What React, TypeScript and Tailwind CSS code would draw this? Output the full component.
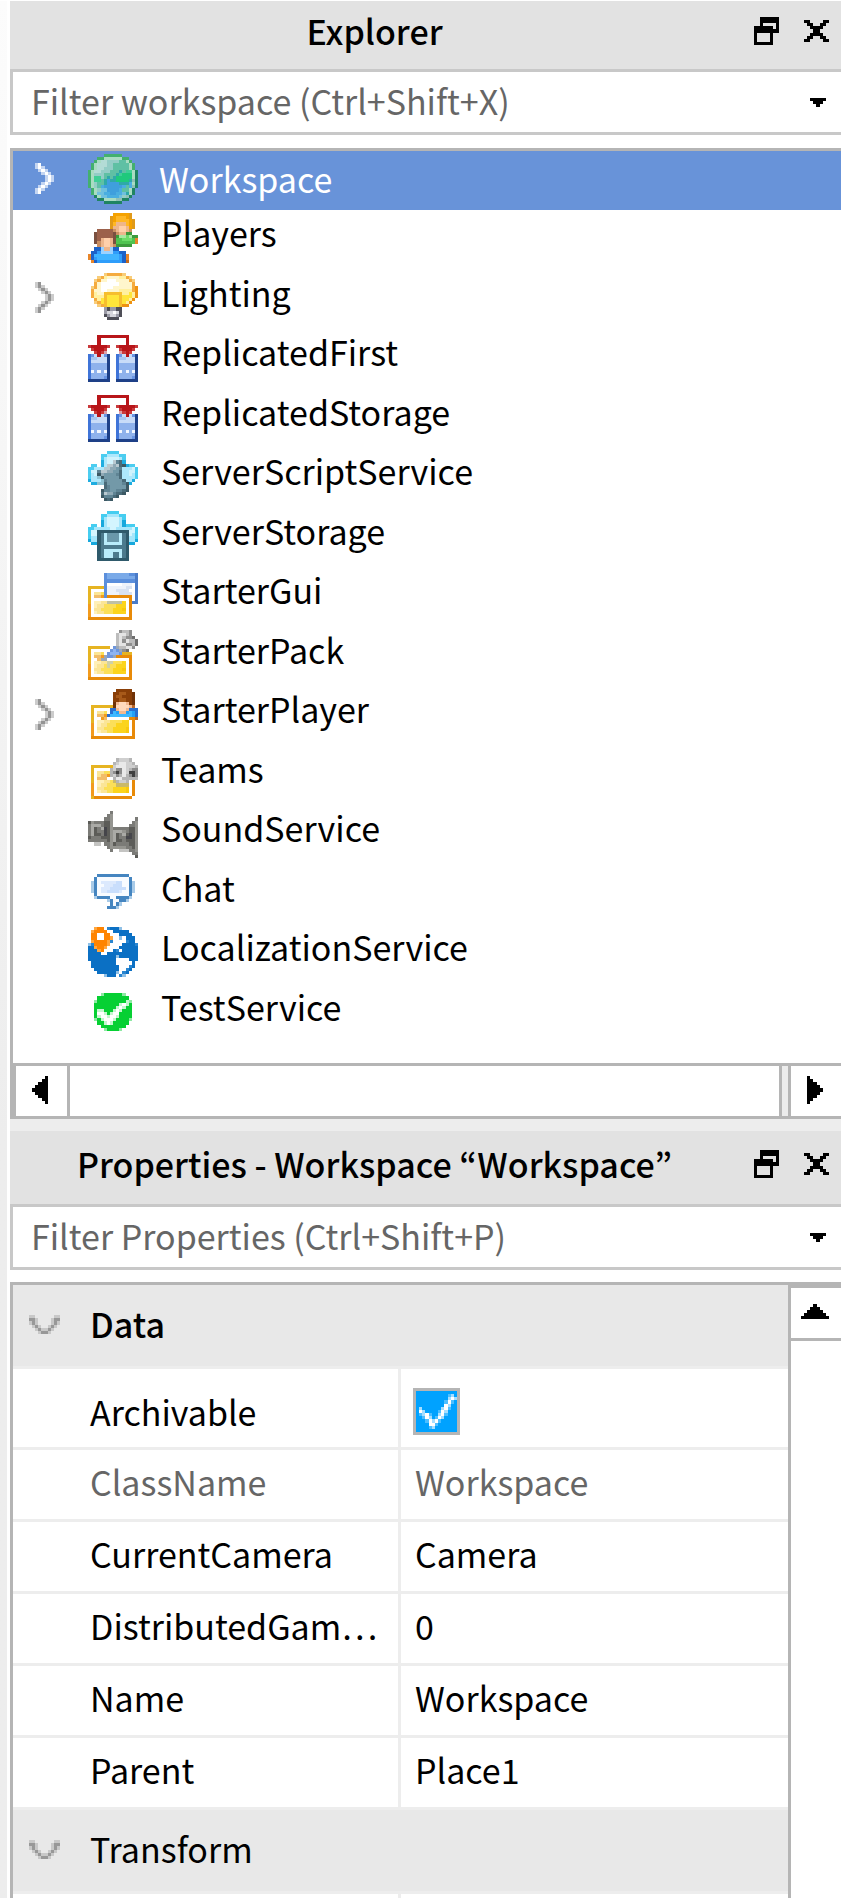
import React from "react";

type Palette = Record<string, string>;
type Art = { rows: string[]; palette: Palette };

/** Draws a small bitmap icon, one character per cell; "." is transparent. */
function Pixels({ art, className }: { art: Art; className: string }) {
  const cols = Math.max(...art.rows.map((r) => r.length));
  const cells: React.ReactNode[] = [];
  art.rows.forEach((row, y) => {
    let x = 0;
    while (x < row.length) {
      const ch = row[x];
      let end = x + 1;
      while (end < row.length && row[end] === ch) end++;
      if (art.palette[ch]) {
        cells.push(<rect key={`${x}-${y}`} x={x} y={y} width={end - x} height={1} fill={art.palette[ch]} />);
      }
      x = end;
    }
  });
  return (
    <svg
      viewBox={`0 0 ${cols} ${art.rows.length}`}
      preserveAspectRatio="none"
      shapeRendering="crispEdges"
      aria-hidden="true"
      className={className}
    >
      {cells}
    </svg>
  );
}

const globe: Art = {
  palette: {
    g: "#43b06e", d: "#1f8462", w: "#a9dcc2", p: "#93cdc6", q: "#b3dcd6", t: "#5fc0a4",
    G: "#1fc97c", b: "#3f9fdd", B: "#4aaee0", k: "#3fcf96", l: "#6fc0de", n: "#2fa9a8", h: "#8fbfb6",
  },
  rows: [
    ".....gggggg.....",
    "...ggwwwwwwgg...",
    "..gwqqppppttwg..",
    ".gwqqqpptttttwg.",
    ".gwqqppptttttwg.",
    "gwqqppptttntkkwd",
    "gwpppttttnkGGGwd",
    "gwkkptntnGGGGGwd",
    "gwkktnbnnGGGGnhd",
    "gwpttnbbbbnnnBwd",
    "gwptBbbbbbbBtBhd",
    ".gwpllbbbbBttwd.",
    ".gwllBBbbBBlnwd.",
    "..dwllBBBBlphd..",
    "...ddwwwwhhdd...",
    ".....dddddd.....",
  ],
};

const players: Art = {
  palette: {
    O: "#e09a1a", o: "#f5a200", Y: "#ffb726", f: "#eeb68c", F: "#ffd0ab", e: "#c98f62",
    g: "#3c9a3c", G: "#6cdc68", h: "#4fc350", s: "#a8e8a0", N: "#7a5040", n: "#9c614b",
    u: "#1c62c8", c: "#2f9dfa", C: "#3fb4ff", D: "#9ad2ff", k: "#e8862a", r: "#c46a1c",
  },
  rows: [
    "........oooooO..",
    ".......OoYYYoO..",
    ".......OoYYYYoO.",
    ".......OYfffYoO.",
    ".......OffFFfoO.",
    "...nnnnnefFFfe..",
    "..NnnnnnNeffgg..",
    "..NnnnnnNgssGsgg",
    "..NnfFFfNhhGGGhk",
    "..NefFFfNhhhhhhk",
    "...efFFfeggggg..",
    "..uuDffDuu......",
    ".uucDDDDccuu....",
    "kuCCCCCCCCcuk...",
    "kucCCCCCCCcuk...",
    ".kuccccccccur...",
  ],
};

const bulb: Art = {
  palette: {
    o: "#ee9212", O: "#f5ab3e", l: "#f8cd7a", c: "#fff6cc", w: "#ffffff", y: "#fff0a0",
    Y: "#ffe53a", Z: "#ffd51c", a: "#f6be2e", k: "#4f4f58", g: "#9a9aa6", G: "#d6d6dc",
  },
  rows: [
    ".....lOOOOOl....",
    "...lOyccccyyOl..",
    "..lOccwwwccccOl.",
    "..OcwwwwwwccccO.",
    ".lOcwwwwccccccOo",
    ".OccwwccccyyyyOo",
    ".OyccaaaaaayyYyo",
    ".OyyyaYYYYaYYYyo",
    "..OyYaYYYYaYYyo.",
    "..lOYaYYYYaYyo..",
    "...lOaYYYYaoo...",
    ".....gkggkk.....",
    ".....gGGwGk.....",
    ".....kgGGgk.....",
    "......kkkk......",
    "................",
  ],
};

const replicated: Art = {
  palette: {
    r: "#b81519", R: "#c93a3c", p: "#dca0a8", b: "#3f74d8", l: "#a8c6f2", c: "#c9dcf8",
    m: "#8fb2ec", w: "#f2f7ff", d: "#1e4087", k: "#6b96e4",
  },
  rows: [
    "................",
    "...rrrrrrrrrr...",
    "...r........r...",
    "...r........r...",
    "RrrrrrR..RrrrrrR",
    ".RrrrR....RrrrR.",
    "..RrRp....pRrR..",
    "bkcrckd..bkcrckd",
    "bllcccd..bllcccd",
    "bcccccd..bcccccd",
    "bmmmmmd..bmmmmmd",
    "bmmmmmd..bmmmmmd",
    "bwmwmwd..bwmwmwd",
    "bmmmmmd..bmmmmmd",
    "bmmmmkd..bmmmmkd",
    "ddddddd..ddddddd",
  ],
};

const serverScript: Art = {
  palette: {
    s: "#4ccdf0", S: "#1fade0", l: "#d0f3fd", w: "#aee8fc", p: "#8fdcf4", d: "#3c5964",
    m: "#5f8494", M: "#7399a8", g: "#8fa9b5", h: "#b9c9d0", e: "#4a6b79", x: "#8ec3d4",
  },
  rows: [
    "......ssss......",
    "....sswwwwss....",
    "....swllllws....",
    "....SwllhmeS....",
    ".ss.SwhhghedSss.",
    "sswwwhhggMmwwwls",
    "sllmhhggMMewwlls",
    "swldgMMMMmewwlws",
    "swwxdMMMMMewwwws",
    "SwwwxmMMMMMewwS.",
    ".SSxxeMMMMMmdS..",
    ".....emMMMMMd...",
    "....dmmMMmmed...",
    "....ehggmeed....",
    "....dmmmed......",
    ".....ded........",
  ],
};

const serverStorage: Art = {
  palette: {
    s: "#45cdf0", S: "#17a8dc", l: "#d4f5fe", w: "#a6e6fb", d: "#2f5a6b", m: "#4c7a8d",
    M: "#6a98aa", p: "#b9ecfb", q: "#e0f9ff",
  },
  rows: [
    "......ssss......",
    "....sswwwwss....",
    "....swllllws....",
    "....SwllllwS....",
    ".ss.SwllllwSsss.",
    "sswwwwwllwwwwwls",
    "sllddddddddddlls",
    "slldmpMMMMpmdlws",
    "swwdmpMMMMpmdwws",
    "SwwdmpMMMMpmdwwS",
    ".SSdmppppppmdSS.",
    "...dmmmmmmmmd...",
    "...dmppppppmd...",
    "...dmpppmmpmd...",
    "...dmpppmmpmd...",
    "...dddddddddd...",
  ],
};

const folderColors: Palette = {
  y: "#e6b422", o: "#e88a08", O: "#f29b1d", w: "#ffffff", c: "#fff0b8", f: "#fbe596",
  F: "#fbdf58", Y: "#fbd41c", Z: "#f9c80c", t: "#f2bd6a",
};

const starterGui: Art = {
  palette: { ...folderColors, b: "#4a7bc8", B: "#7aaae8", m: "#5b8fdc", l: "#d8e2f2", v: "#eef3fb", g: "#bfc0a4" },
  rows: [
    "................",
    ".....mBBBBBBBmmb",
    ".....mBBBBBBBBBb",
    ".....mmmmmmmmmmb",
    ".....mwwwwwvvvwb",
    "yyyyymvvvvvvllwb",
    "ywwwwmvvvllllwwb",
    "ywffFmvvvvllllwb",
    "ywttOmoooooooowb",
    "ywwwwwwwwwwwwowb",
    "ywccffgggggYwobb",
    "OwcffFFFFYYYwo..",
    "OwffFFFFYYYZwo..",
    "OwcffFFFYYYYwo..",
    "Owwwwwwwwwwwwo..",
    "oooooooooooooo..",
  ],
};

const starterPack: Art = {
  palette: { ...folderColors, g: "#bdbdbd", G: "#8f8f8f", h: "#e4e4e4", k: "#6f6f6f", b: "#8fb4f0", B: "#6f96dc", s: "#9aa7b8", v: "#cfd0a8" },
  rows: [
    "..........GggG..",
    ".........ghhgG..",
    ".........ghgGGk.",
    ".........ghGhggk",
    ".........ghhGGgk",
    "yyyyyyy.BsgghhG.",
    "ywwwwwwBbBsGk...",
    "ywffFwBbbbByyy..",
    "ywttOsBBsooooo..",
    "ywwtsswwwwwwwo..",
    "ywccffvvFFFYwo..",
    "OwcffFvFFYYYwo..",
    "OwffFFFFYYYZwo..",
    "OwcffFFFYYYYwo..",
    "Owwwwwwwwwwwwo..",
    "oooooooooooooo..",
  ],
};

const starterPlayer: Art = {
  palette: { ...folderColors, n: "#8a3f08", N: "#6f3208", m: "#a85a1a", s: "#f2b890", S: "#ffd9bc", b: "#2a6fd0", B: "#23a0f8", C: "#3fb8ff", k: "#b9672a" },
  rows: [
    ".........nnnnn..",
    "........nnmmnnN.",
    "........nmmnnnN.",
    "........nnmmnnN.",
    "........NsSSsnN.",
    ".yyyyyyyNSSSSsk.",
    ".ywwwwwbbsSSsbbb",
    ".ywffFwbCBssBCBb",
    ".ywttObCCCCCCCBb",
    ".ywwOtwwwwwwwook",
    ".ywccffFFFFYYwo.",
    ".OwcffFFFYYYYwo.",
    ".OwffFFFYYYYZwo.",
    ".OwcffFFYYYYZwo.",
    ".Owwwwwwwwwwwwo.",
    ".oooooooooooooo.",
  ],
};

const teams: Art = {
  palette: { ...folderColors, h: "#e9e9e9", H: "#cfcfcf", g: "#b5b5b5", G: "#8c8c8c", k: "#3f3f3f", v: "#c9b96a" },
  rows: [
    "................",
    "................",
    "................",
    ".........gHHHg..",
    "........gHhhHHg.",
    ".yyyyyyyHhhhHHHg",
    ".ywwwwwgHGGhHgGG",
    ".ywffFFgGkGhHkkG",
    ".ywfttOgHGghgGkG",
    ".ywtttwwghhggggg",
    ".ywccffFvgHHgwo.",
    ".OwcffFFFvvvvwo.",
    ".OwffFFFYYYYZwo.",
    ".OwcffFFYYYYZwo.",
    ".Owwwwwwwwwwwwo.",
    ".yoooooooooooo..",
  ],
};

const sound: Art = {
  palette: { a: "#5c5c58", b: "#7b7b77", c: "#94948f", d: "#aaaaa6", e: "#45454a", l: "#c4c4c2" },
  rows: [
    "................",
    ".......b........",
    "......bc........",
    ".....bbc.......b",
    "acbbbaac......bc",
    "bdddbaac.....bbc",
    "bdabdeacbbbbbaac",
    "bdabbeacdddcbaac",
    "bdaabeacdabdaeac",
    "abbbaaacdabbeeac",
    "bbbbbbacdaabaaac",
    "..ll.bbcabbbbaac",
    "......bcccccbbac",
    ".......b..lllbbc",
    "..............bb",
    "...............a",
  ],
};

const chat: Art = {
  palette: { b: "#4585c0", l: "#a9cbe8", v: "#dce9fd", c: "#c9defc", w: "#f8fbff" },
  rows: [
    "................",
    "................",
    "...bbbbbbbbbb...",
    "..bwwwwwwwwwwb..",
    ".lbwvvvvvccwwbl.",
    ".lbwwvvvcccwwbl.",
    ".lbwvvvcccccwbl.",
    ".lbwvvccccvwwbl.",
    "..bwwwwwwwwwwb..",
    "..lbbbbwwbbbbl..",
    "......lbwwbbl...",
    ".......bwbl.....",
    "......bbbl......",
    "................",
    "................",
    "................",
  ],
};

const localization: Art = {
  palette: { b: "#0b70c4", B: "#2a86d0", l: "#8fc0e6", o: "#ff8400", O: "#ffa740", w: "#ffffff" },
  rows: [
    "..Ooo.Bbbbl.....",
    ".Ooooo.wbbbbb...",
    ".oowwoo.wwbbbb..",
    ".oowwooOwwlwbbb.",
    ".OooooOBwwwwBbb.",
    "lBooooOwwwwbbbbB",
    "bbOooOwwwwbbbbbb",
    "bbbOowwwbBwbbbbb",
    "bbbbwwbbbbbbbbbb",
    "bbbbbbbbblbbbbbb",
    "bbbbbbbbbwwwwbbb",
    ".bbbbbbbbwwwwwb.",
    ".bbbbbbbbbwwwBb.",
    "..bbbbbbbbwwBb..",
    "...bbbbbblwBb...",
    ".....lbbbwBl....",
  ],
};

const testPass: Art = {
  palette: { g: "#06d033", l: "#8de9a3", w: "#ffffff", m: "#c6f5d0" },
  rows: [
    "................",
    "................",
    "....lggggggl....",
    "...gggggggggg...",
    "..lgggggggggml..",
    "..ggggggggmwmg..",
    "..gggggggmwmgg..",
    "..gmmgggmwmggg..",
    "..gwwmgmwwgggg..",
    "..gmwwmwwmgggg..",
    "..lgmwwwmggggl..",
    "...ggmwmggggg...",
    "....gggggggg....",
    ".....lggggl.....",
    "................",
    "................",
  ],
};

const black: Palette = { X: "#000000" };
const restoreArt: Art = {
  palette: black,
  rows: ["..XXXXXX", "..XXXXXX", "..X....X", "XXXXXX.X", "XXXXXXXX", "X....X..", "X....X..", "X....X..", "XXXXXX.."],
};
const closeArt: Art = {
  palette: black,
  rows: ["XX....XX", ".XX..XX.", "..XXXX..", "...XX...", "..XXXX..", ".XX..XX.", "XX....XX"],
};
const caretArt: Art = { palette: black, rows: ["XXXXX", ".XXX.", "..X.."] };
const leftArt: Art = {
  palette: black,
  rows: ["....X", "...XX", "..XXX", ".XXXX", "XXXXX", ".XXXX", "..XXX", "...XX", "....X"],
};
const rightArt: Art = {
  palette: black,
  rows: ["X....", "XX...", "XXX..", "XXXX.", "XXXXX", "XXXX.", "XXX..", "XX...", "X...."],
};
const upArt: Art = { palette: black, rows: ["....X....", "...XXX...", "..XXXXX..", ".XXXXXXX.", "XXXXXXXXX"] };

const chevronRightRows = [
  "ba....", "bab...", ".bab..", "..bab.", "...bab", "...bab", "..bab.", ".bab..", "bab...", "ba....",
];
const chevronRight: Art = { palette: { a: "#949494", b: "#cccccc" }, rows: chevronRightRows };
const chevronRightLight: Art = { palette: { a: "#ffffff", b: "#c4d5f1" }, rows: chevronRightRows };
const chevronDown: Art = {
  palette: { a: "#989898", b: "#c8c8c8" },
  rows: ["bb......bb", "aab....baa", "bab....bab", ".bab..bab.", "..babbab..", "...baab..."],
};
const checkArt: Art = {
  palette: { w: "#ffffff", v: "#a6deff", s: "#4dbeff" },
  rows: [
    ".............",
    "..........sv.",
    "..........vwv",
    ".........sws.",
    ".........wv..",
    ".v......vws..",
    ".wv....swv...",
    ".svws..vws...",
    "..swv.swv....",
    "...swvws.....",
    "....wws......",
    "....sv.......",
    ".............",
  ],
};

const services: { name: string; art: Art; expandable?: boolean }[] = [
  { name: "Players", art: players },
  { name: "Lighting", art: bulb, expandable: true },
  { name: "ReplicatedFirst", art: replicated },
  { name: "ReplicatedStorage", art: replicated },
  { name: "ServerScriptService", art: serverScript },
  { name: "ServerStorage", art: serverStorage },
  { name: "StarterGui", art: starterGui },
  { name: "StarterPack", art: starterPack },
  { name: "StarterPlayer", art: starterPlayer, expandable: true },
  { name: "Teams", art: teams },
  { name: "SoundService", art: sound },
  { name: "Chat", art: chat },
  { name: "LocalizationService", art: localization },
  { name: "TestService", art: testPass },
];

const properties = [
  { name: "ClassName", value: "Workspace", readOnly: true },
  { name: "CurrentCamera", value: "Camera" },
  { name: "DistributedGam…", value: "0" },
  { name: "Name", value: "Workspace" },
  { name: "Parent", value: "Place1" },
];

function PanelHeader({ title, className }: { title: string; className: string }) {
  return (
    <header className={`flex items-center bg-[#e2e2e2] pb-[8px] ${className}`}>
      <h2 className="min-w-0 flex-1 text-center leading-[50px] font-medium whitespace-nowrap">{title}</h2>
      <div className="flex w-[102px] items-center gap-[25px] pl-[15px]">
        <button type="button" aria-label={`Float ${title}`}>
          <Pixels art={restoreArt} className="block h-[28px] w-[25px]" />
        </button>
        <button type="button" aria-label={`Close ${title}`}>
          <Pixels art={closeArt} className="block h-[22px] w-[25px]" />
        </button>
      </div>
    </header>
  );
}

function FilterBox({ placeholder }: { placeholder: string }) {
  return (
    <div className="flex h-[66px] items-center border-y-[3px] border-l-[3px] border-[#c8c8c8] bg-white pr-[15px] pl-[18px]">
      <input
        type="text"
        aria-label={placeholder}
        placeholder={placeholder}
        className="h-full min-w-0 flex-1 bg-transparent pb-[4px] outline-none placeholder:text-[#666666]"
      />
      <button type="button" aria-label="Filter history">
        <Pixels art={caretArt} className="block h-[9px] w-[16px]" />
      </button>
    </div>
  );
}

function Explorer() {
  return (
    <section>
      <PanelHeader title="Explorer" className="h-[68px]" />
      <FilterBox placeholder="Filter workspace (Ctrl+Shift+X)" />
      <div className="mt-[13px] border-t-[3px] border-l-[3px] border-[#b5b5b5]">
        <ul className="pb-[20px]">
          <li className="flex h-[59px] items-start bg-[#6893d9] pl-[22px] text-white">
            <button type="button" aria-label="Expand Workspace" className="flex h-[54px] w-[53px] items-center">
              <Pixels art={chevronRightLight} className="block h-[31px] w-[19px]" />
            </button>
            <Pixels art={globe} className="mt-[3px] block size-[50px]" />
            <span className="pl-[21px] leading-[56px]">Workspace</span>
          </li>
          <li>
            <ul className="grid h-[833px] auto-rows-fr">
              {services.map((s) => (
                <li key={s.name} className="flex items-start pl-[22px]">
                  <span className="flex h-[56px] w-[53px] items-center">
                    {s.expandable && (
                      <button type="button" aria-label={`Expand ${s.name}`}>
                        <Pixels art={chevronRight} className="block h-[31px] w-[19px]" />
                      </button>
                    )}
                  </span>
                  <Pixels art={s.art} className="mt-[3px] block size-[50px]" />
                  <span className="pl-[23px] leading-[46px]">{s.name}</span>
                </li>
              ))}
            </ul>
          </li>
        </ul>
        <div className="flex h-[56px] items-stretch border-y-[3px] border-l-[3px] border-[#b5b5b5]">
          <button type="button" aria-label="Scroll left" className="flex w-[54px] items-center border-r-[3px] border-[#b5b5b5] pb-[3px] pl-[16px]">
            <Pixels art={leftArt} className="block h-[28px] w-[16px]" />
          </button>
          <div className="flex-1 border-r-[3px] border-[#b5b5b5] bg-white" />
          <div className="w-[6px] bg-[#ececec]" />
          <button type="button" aria-label="Scroll right" className="flex w-[53px] items-center border-l-[3px] border-[#b5b5b5] pb-[3px] pl-[16px]">
            <Pixels art={rightArt} className="block h-[28px] w-[16px]" />
          </button>
        </div>
      </div>
    </section>
  );
}

function CategoryRow({ name, className }: { name: string; className?: string }) {
  return (
    <tr className="h-[84px] bg-[#e8e8e8]">
      <th colSpan={2} scope="colgroup" className="border-b-[3px] border-[#ededed] p-0 text-left font-normal">
        <button type="button" className="flex items-center pb-[3px] pl-[16px]">
          <Pixels art={chevronDown} className="block h-[19px] w-[31px]" />
          <span className={`pl-[30px] leading-[50px] ${className ?? ""}`}>{name}</span>
        </button>
      </th>
    </tr>
  );
}

function Properties() {
  return (
    <section className="flex flex-1 flex-col">
      <PanelHeader title="Properties - Workspace “Workspace”" className="h-[73px]" />
      <FilterBox placeholder="Filter Properties (Ctrl+Shift+P)" />
      <div className="mt-[12px] flex flex-1 border-t-[3px] border-l-[3px] border-[#b5b5b5]">
        <div className="min-w-0 flex-1">
          <table className="w-full table-fixed border-separate border-spacing-0">
            <colgroup>
              <col className="w-[388px]" />
              <col />
            </colgroup>
            <tbody>
              <CategoryRow name="Data" className="font-medium" />
              <tr className="h-[81px]">
                <th scope="row" className="border-r-[3px] border-b-[3px] border-[#ededed] p-0 pt-[7px] pl-[77px] text-left leading-[50px] font-normal">
                  <label htmlFor="archivable">Archivable</label>
                </th>
                <td className="border-b-[3px] border-[#ededed] p-0 pl-[12px]">
                  <div className="relative mt-[6px] size-[47px]">
                    <input
                      id="archivable"
                      type="checkbox"
                      defaultChecked
                      className="peer block size-[47px] appearance-none border-[3px] border-[#b5b5b5] bg-white checked:bg-[#00a2ff]"
                    />
                    <span className="pointer-events-none absolute inset-[3px] hidden peer-checked:block">
                      <Pixels art={checkArt} className="block size-full" />
                    </span>
                  </div>
                </td>
              </tr>
              {properties.map((p) => (
                <tr key={p.name} className={p.readOnly ? "h-[72px] text-[#666666]" : "h-[72px]"}>
                  <th scope="row" className="border-r-[3px] border-b-[3px] border-[#ededed] p-0 pb-[6px] pl-[77px] text-left leading-[50px] font-normal whitespace-nowrap">
                    {p.name}
                  </th>
                  <td className="border-b-[3px] border-[#ededed] p-0 pb-[6px] pl-[14px] leading-[50px]">{p.value}</td>
                </tr>
              ))}
              <CategoryRow name="Transform" />
              <tr className="h-[4px]">
                <td className="border-r-[3px] border-[#ededed] p-0" />
                <td className="p-0" />
              </tr>
            </tbody>
          </table>
        </div>
        <div className="w-[53px] border-t-[3px] border-l-[3px] border-[#b5b5b5]">
          <button type="button" aria-label="Scroll up" className="flex h-[53px] w-full items-center justify-center border-b-[3px] border-[#b5b5b5] pr-[3px] pb-[4px]">
            <Pixels art={upArt} className="block h-[15px] w-[28px]" />
          </button>
        </div>
      </div>
    </section>
  );
}

export default function App() {
  return (
    <div className="flex min-h-screen overflow-hidden bg-white pt-px pr-px text-[34px] text-black [font-family:'Noto_Sans_CJK_KR','Noto_Sans',sans-serif]">
      <div className="mr-[3px] w-[7px] shrink-0 bg-linear-to-b from-[#fcfcfc] to-[#ededed] to-60%" />
      <main className="flex min-w-0 flex-1 flex-col">
        <Explorer />
        <div className="h-[12px] bg-[#ededed]" />
        <Properties />
      </main>
    </div>
  );
}
